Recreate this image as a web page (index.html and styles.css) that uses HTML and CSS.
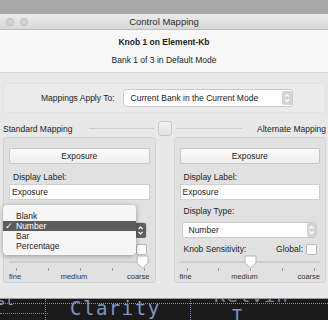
FILE: index.html
```html
<!DOCTYPE html>
<html lang="en">
<head>
  <meta charset="UTF-8">
  <title>Control Mapping</title>
  <link rel="stylesheet" href="styles.css">
</head>
<body>

  <div class="desk"></div>

  <div class="window">
    <div class="titlebar">
      <div class="lights"><i></i><i></i><i></i></div>
      <div class="title">Control Mapping</div>
      <div></div>
    </div>

    <div class="header">
      <div class="knob">Knob 1 on Element-Kb</div>
      <div class="bank">Bank 1 of 3 in Default Mode</div>
    </div>

    <div class="content">
      <div class="apply">
        <span>Mappings Apply To:</span>
        <div class="popup wide">
          <span>Current Bank in the Current Mode</span>
          <svg class="stepper" width="10" height="14" viewBox="0 0 10 14"><rect x="0" y="0" width="10" height="14" rx="2" fill="#d4d4d4"/><path d="M3 5.5 L5 3.5 L7 5.5 M3 8.5 L5 10.5 L7 8.5" fill="none" stroke="#fff" stroke-width="1.2"/></svg>
        </div>
      </div>

      <div class="switch">
        <div class="side left"><span>Standard Mapping</span><span class="line"></span></div>
        <div class="switch-knob"></div>
        <div class="side right"><span class="line"></span><span>Alternate Mapping</span></div>
      </div>

      <div class="panels">
        <section class="panel">
          <div class="btn">Exposure</div>
          <div class="lbl">Display Label:</div>
          <div class="field">Exposure</div>
          <div class="lbl type">Display Type:</div>
          <div class="popup pressed">
            <span>Number</span>
            <svg class="stepper" width="11" height="15" viewBox="0 0 11 15"><rect x="0" y="0" width="11" height="15" rx="2" fill="#5f5f5f"/><path d="M3.5 6 L5.5 4 L7.5 6 M3.5 9 L5.5 11 L7.5 9" fill="none" stroke="#fff" stroke-width="1.2"/></svg>
          </div>
          <div class="sens-row">
            <span>Knob Sensitivity:</span>
            <span class="global">Global: <span class="check"></span></span>
          </div>
          <div class="slider">
            <div class="track"></div>
            <svg class="thumb" style="left: 95%" width="13" height="14" viewBox="0 0 13 14"><polygon points="1,1 12,1 12,8 6.5,13 1,8" fill="#fff" stroke="#b5b5b5"/></svg>
          </div>
          <div class="ticks"><i></i><i></i><i></i><i></i><i></i></div>
          <div class="scale"><span>fine</span><span>medium</span><span>coarse</span></div>

          <ul class="menu">
            <li>Blank</li>
            <li class="sel"><span class="mark">✓</span>Number</li>
            <li>Bar</li>
            <li>Percentage</li>
          </ul>
        </section>

        <section class="panel">
          <div class="btn">Exposure</div>
          <div class="lbl">Display Label:</div>
          <div class="field">Exposure</div>
          <div class="lbl type">Display Type:</div>
          <div class="popup">
            <span>Number</span>
            <svg class="stepper" width="9" height="14" viewBox="0 0 9 14"><rect x="0" y="0" width="9" height="14" rx="2" fill="#d4d4d4"/><path d="M2.5 5.5 L4.5 3.5 L6.5 5.5 M2.5 8.5 L4.5 10.5 L6.5 8.5" fill="none" stroke="#fff" stroke-width="1.2"/></svg>
          </div>
          <div class="sens-row">
            <span>Knob Sensitivity:</span>
            <span class="global">Global: <span class="check"></span></span>
          </div>
          <div class="slider">
            <div class="track"></div>
            <svg class="thumb" style="left: 50.5%" width="13" height="14" viewBox="0 0 13 14"><polygon points="1,1 12,1 12,8 6.5,13 1,8" fill="#fff" stroke="#b5b5b5"/></svg>
          </div>
          <div class="ticks"><i></i><i></i><i></i><i></i><i></i></div>
          <div class="scale"><span>fine</span><span>medium</span><span>coarse</span></div>
        </section>
      </div>
    </div>
  </div>

  <div class="backdrop">
    <span class="dots h1"></span>
    <span class="dots h2"></span>
    <span class="dots v1"></span>
    <span class="dots v2"></span>
    <span class="word st">st</span>
    <span class="word clarity">Clarity</span>
    <span class="word kelvin">Kelvin</span>
    <span class="word tee">T</span>
  </div>

</body>
</html>
```

FILE: styles.css
```css
* { box-sizing: border-box; margin: 0; padding: 0; }
body {
  font-family: "Liberation Sans", Arial, sans-serif;
  font-size: 8.5px;
  color: #1c1c1c;
  background: #181818;
  width: 328px;
  height: 320px;
  overflow: hidden;
}
.desk { height: 14px; background: #a9a9a9; }
.window { background: #e8e8e8; }
.titlebar {
  height: 16px;
  display: grid;
  grid-template-columns: 1fr auto 1fr;
  align-items: center;
  background: linear-gradient(#ececec, #d7d7d7);
  border-bottom: 1px solid #bdbdbd;
}
.lights { display: flex; gap: 6px; margin-left: -8px; }
.lights i {
  width: 8px;
  height: 8px;
  border-radius: 50%;
  background: #d3d3d3;
  border: 1px solid #bdbdbd;
}
.title { font-size: 9.5px; color: #2a2a2a; }
.header {
  height: 43px;
  background: #f8f8f8;
  border-bottom: 1px solid #d4d4d4;
  display: flex;
  flex-direction: column;
  align-items: center;
  padding-top: 7px;
  gap: 7px;
  line-height: 11px;
}
.knob { font-weight: bold; }
.content { padding: 10px 2px 15px 3px; }
.apply {
  height: 30px;
  display: flex;
  align-items: center;
  gap: 8px;
  padding-left: 37px;
  border: 1px solid #e2e2e2;
  border-radius: 3px;
  background: #ebebeb;
}
.popup {
  height: 16px;
  display: flex;
  align-items: center;
  justify-content: space-between;
  background: #fff;
  border: 1px solid #cbcbcb;
  border-radius: 3px;
  padding: 0 0 0 6px;
  margin: 5px 3px 0 2px;
}
.popup.wide { width: 170px; height: 18px; margin: 0; padding-left: 7px; }
.popup .stepper { display: block; }
.switch {
  height: 17px;
  margin-top: 7px;
  display: grid;
  grid-template-columns: 1fr auto 1fr;
  align-items: center;
}
.side { display: flex; align-items: center; }
.side .line { flex: 1; height: 1px; background: #cbcbcb; }
.left .line { margin-left: 17px; }
.right .line { margin-right: 15px; }
.switch-knob {
  width: 14px;
  height: 15px;
  margin: 0 4px;
  border: 1px solid #c6c6c6;
  border-radius: 3px;
  background: linear-gradient(#f2f2f2, #e2e2e2);
}
.panels {
  display: grid;
  grid-template-columns: 1fr 1fr;
  gap: 18px;
}
.panel {
  position: relative;
  height: 146px;
  background: #e1e1e1;
  border: 1px solid #d2d2d2;
  border-radius: 3px;
  padding: 10px 5px 0 5px;
}
.btn {
  height: 16px;
  line-height: 14px;
  text-align: center;
  border: 1px solid #c6c6c6;
  border-radius: 2px;
  background: linear-gradient(#fbfbfb, #efefef);
}
.lbl { margin-top: 7px; line-height: 12px; padding-left: 4px; }
.lbl.type { margin-top: 5px; }
.field {
  margin-top: 1px;
  height: 16px;
  line-height: 14px;
  padding-left: 2px;
  background: #fff;
  border: 1px solid #d0d0d0;
}
.sens-row {
  margin-top: 5px;
  line-height: 12px;
  display: flex;
  justify-content: space-between;
  align-items: center;
  padding: 0 3px 0 4px;
}
.global { display: flex; align-items: center; }
.check {
  width: 11px;
  height: 11px;
  margin-left: 3px;
  background: #fff;
  border: 1px solid #b9b9b9;
  border-radius: 2px;
}
.slider { position: relative; height: 13px; }
.track { position: relative; top: 6px; height: 2px; background: #cdcdcd; border-radius: 1px; }
.thumb { position: absolute; top: 0; margin-left: -6px; }
.ticks {
  display: flex;
  justify-content: space-between;
  padding: 0 5px 0 7px;
  height: 4px;
}
.ticks i { width: 1px; height: 3px; background: #9a9a9a; }
.scale {
  display: flex;
  justify-content: space-between;
  font-size: 7.5px;
  line-height: 10px;
  color: #333;
}
.menu {
  position: absolute;
  left: -1px;
  top: 67px;
  width: 133px;
  padding: 6px 0 4px;
  list-style: none;
  background: #f6f6f6;
  border-radius: 4px;
  box-shadow: 0 1px 5px rgba(0, 0, 0, 0.35);
}
.menu li { position: relative; height: 10px; line-height: 10px; padding-left: 13px; }
.menu li.sel { background: #5c5c5c; color: #fff; }
.mark { position: absolute; left: 2px; font-size: 9px; }
.backdrop {
  position: relative;
  height: 22px;
  overflow: hidden;
  background: #1a1a1a;
  border-top: 1px solid #9c9c9c;
}
.dots { position: absolute; border-color: #7f8ea6; border-style: dotted; border-width: 0; }
.h1 { left: 0; right: 0; top: 4px; border-top-width: 1px; }
.h2 { left: 0; width: 48px; top: 14px; border-top-width: 1px; }
.v1 { left: 45px; top: 0; bottom: 0; border-left-width: 1px; }
.v2 { left: 190px; top: 0; bottom: 0; border-left-width: 1px; }
.word {
  position: absolute;
  font-family: "DejaVu Sans Mono", monospace;
  line-height: 1;
}
.st { left: -3px; top: -6px; font-size: 14px; color: #8ea0bd; }
.clarity { left: 70px; top: 0; font-size: 19px; color: #7f97c4; letter-spacing: 1.5px; }
.kelvin { left: 214px; top: -13px; font-size: 19px; color: #7a8089; letter-spacing: 1px; }
.tee { left: 232px; top: 9px; font-size: 17px; color: #7f97c4; }
```
